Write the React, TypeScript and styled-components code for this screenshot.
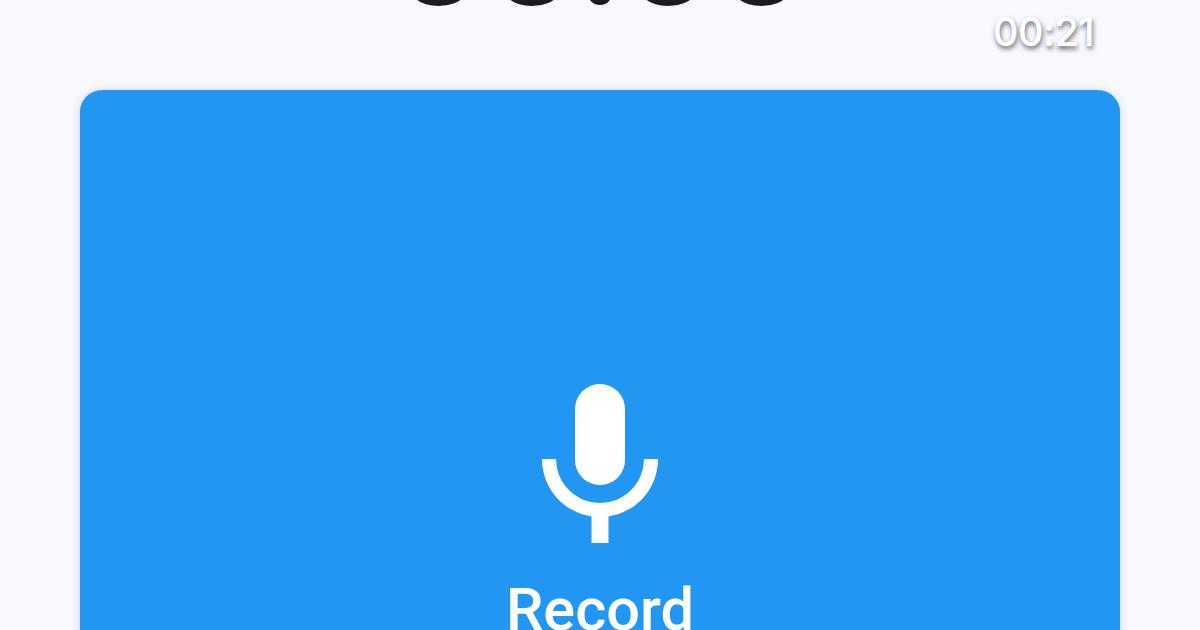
import React from "react";
import styled, { createGlobalStyle } from "styled-components";

const Global = createGlobalStyle`
  html, body { margin: 0; padding: 0; height: 630px; overflow: hidden; background: #f8f9fe; }
  body { font-family: Roboto, "Liberation Sans", sans-serif; }
`;

const Page = styled.div`
  width: 1200px;
  height: 630px;
  overflow: hidden;
  display: flex;
  flex-direction: column;
  background: #f8f9fe;
`;

const Header = styled.header`
  position: relative;
  height: 90px;
  flex: none;
  display: flex;
  justify-content: center;
  align-items: flex-end;
`;

const MainTimer = styled.div`
  position: absolute;
  left: 0;
  right: 0;
  bottom: 60px;
  text-align: center;
  font-size: 164px;
  line-height: 1;
  font-weight: 500;
  color: #1b1c22;
  white-space: nowrap;
`;

const Overlay = styled.div`
  position: absolute;
  left: 993px;
  top: 10px;
  font-family: Inter, Roboto, sans-serif;
  font-size: 39.5px;
  line-height: 44px;
  font-weight: 500;
  letter-spacing: -0.5px;
  color: #ffffff;
  text-shadow: 1px 3px 5px rgba(0, 0, 0, 0.6);
`;

const Card = styled.section`
  flex: none;
  margin: 0 80px;
  height: 640px;
  padding-top: 294px;
  box-sizing: border-box;
  background: #2196f3;
  border-radius: 22px;
  box-shadow: 0 1px 8px rgba(40, 60, 120, 0.22);
  display: flex;
  flex-direction: column;
  align-items: center;
`;

const MicIcon = styled.svg`
  display: block;
  width: 116px;
  height: 159px;
  fill: #ffffff;
`;

const Label = styled.div`
  margin-top: 31px;
  font-size: 59.5px;
  line-height: 72px;
  font-weight: 500;
  color: #ffffff;
`;

export default function App() {
  return (
    <Page>
      <Global />
      <Header>
        <MainTimer>00:00</MainTimer>
        <Overlay>00:21</Overlay>
      </Header>
      <Card>
        <MicIcon viewBox="0 0 116 159" aria-hidden="true">
          <rect x="33" y="0" width="50" height="101" rx="25" />
          <path d="M0 75H14A44 44 0 0 0 102 75H116A58 58 0 0 1 66.5 132.4V159H49.5V132.4A58 58 0 0 1 0 75Z" />
        </MicIcon>
        <Label>Record</Label>
      </Card>
    </Page>
  );
}
